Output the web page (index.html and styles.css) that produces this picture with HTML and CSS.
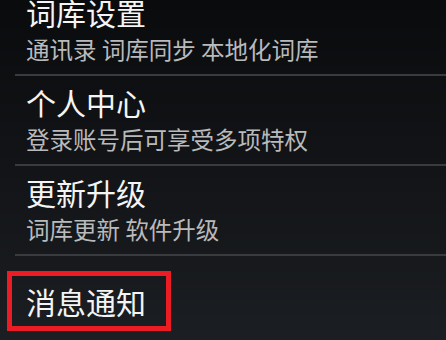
FILE: index.html
```html
<!DOCTYPE html>
<html lang="zh-CN">
<head>
    <meta charset="UTF-8">
    <meta name="viewport" content="width=device-width, initial-scale=1.0">
    <title>设置</title>
    <link rel="stylesheet" href="styles.css">
</head>
<body>
    <ul class="menu-list">
        <li class="menu-item">
            <div class="item-title">词库设置</div>
            <div class="item-desc">通讯录 词库同步 本地化词库</div>
        </li>
        <li class="menu-item">
            <div class="item-title">个人中心</div>
            <div class="item-desc">登录账号后可享受多项特权</div>
        </li>
        <li class="menu-item">
            <div class="item-title">更新升级</div>
            <div class="item-desc">词库更新 软件升级</div>
        </li>
        <li class="menu-item last">
            <div class="item-title"><span class="highlight">消息通知</span></div>
        </li>
    </ul>
</body>
</html>
```

FILE: styles.css
```css
* {
    margin: 0;
    padding: 0;
    box-sizing: border-box;
}

html, body {
    height: 100%;
}

body {
    overflow: hidden;
    background: linear-gradient(180deg, #0a0b0d 0%, #121417 50%, #1b1e22 100%);
    font-family: "Noto Sans CJK SC", "Noto Sans", sans-serif;
    color: #f2f2f2;
}

.menu-list {
    list-style: none;
    margin-top: -14px;
}

.menu-item {
    height: 90px;
    display: flex;
    flex-direction: column;
    justify-content: center;
    margin-left: 15px;
    padding-left: 11px;
    padding-bottom: 3px;
    border-bottom: 2px solid #393b3e;
}

.menu-item.last {
    border-bottom: none;
    padding-bottom: 0;
}

.item-title {
    font-size: 30px;
    line-height: 34px;
    color: #f4f4f4;
}

.item-desc {
    font-size: 23.5px;
    line-height: 28px;
    color: #b9babb;
    margin-top: 6px;
}

.highlight {
    display: inline-block;
    border: 5px solid #ec1c24;
    padding: 8px 20px 8px 14px;
    margin-left: -19px;
}
```
